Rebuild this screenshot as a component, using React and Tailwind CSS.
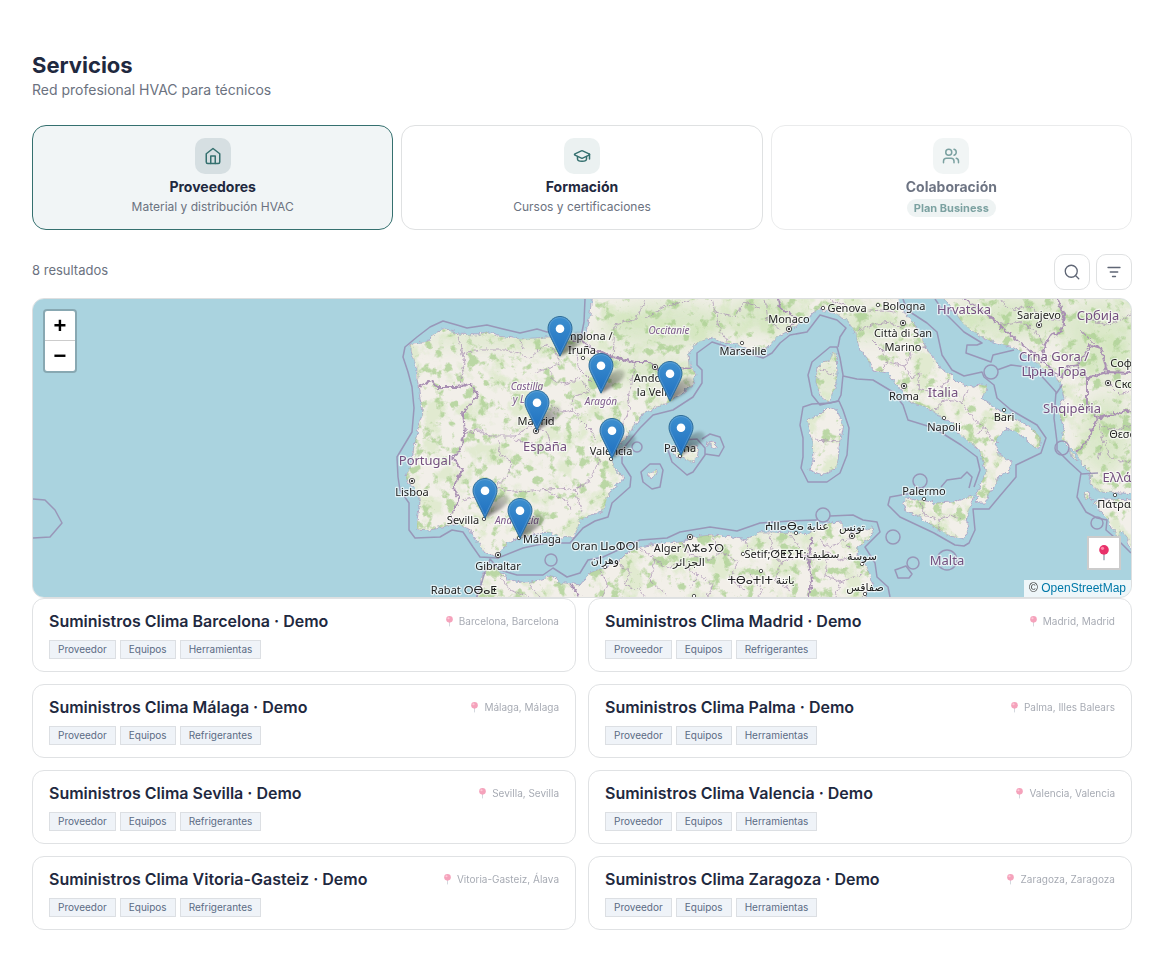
import React, { useState } from "react";
import { GraduationCap, Search, Users } from "lucide-react";

const suppliers = [
  { city: "Barcelona", place: "Barcelona, Barcelona", extra: "Herramientas", x: 637, y: 103 },
  { city: "Madrid", place: "Madrid, Madrid", extra: "Refrigerantes", x: 504, y: 132 },
  { city: "Málaga", place: "Málaga, Málaga", extra: "Refrigerantes", x: 487, y: 240 },
  { city: "Palma", place: "Palma, Illes Balears", extra: "Herramientas", x: 648, y: 157 },
  { city: "Sevilla", place: "Sevilla, Sevilla", extra: "Refrigerantes", x: 452, y: 220 },
  { city: "Valencia", place: "Valencia, Valencia", extra: "Herramientas", x: 579, y: 160 },
  { city: "Vitoria-Gasteiz", place: "Vitoria-Gasteiz, Álava", extra: "Refrigerantes", x: 527, y: 58 },
  { city: "Zaragoza", place: "Zaragoza, Zaragoza", extra: "Herramientas", x: 568, y: 95 },
];

const MAP_WIDTH = 1098;
const MAP_HEIGHT = 298;

const land = [
  // Iberia, France, Italy
  "M410 345L415 343 430 341 432 335 443 329 450 330 457 334 477 335 487 332 497 336 520 339 537 338 547 337 557 337 572 340 580 341 586 332 590 315 592 290H898V299L900 309 907 315 913 322 920 335 932 358 937 362 942 370 951 375 959 383 971 387 980 385 987 386 986 392 981 398 994 407 1014 418 1034 430 1041 438 1039 447 1034 448 1029 442 1017 432 1006 428 997 438 996 447 997 453 1011 462 1009 473 999 475 997 483 989 493 986 503 977 503 976 495 981 483 986 473 981 455 977 448 967 440 959 433 952 422 944 419 934 412 927 407 910 402 897 385 887 373 873 370 867 358 859 348 855 332 847 320 830 312 820 308 803 320 790 330 777 337 768 347 757 352 742 347 733 343 720 342 712 337 697 343 689 352 690 367 695 373 693 385 670 402 657 407 643 413 637 422 628 435 622 443 613 455 612 460 615 470 625 478 613 488 607 498 603 512 590 515 580 520 577 530 572 538 560 537 547 532 533 535 520 538 508 543 502 550 498 558 493 556 483 550 475 538 472 532 457 523 450 525 430 530 417 529 417 520 420 503 417 490 407 483 406 477 412 460 415 440 423 412 420 398 417 378 417 367 413 358Z",
  // Balkans and Greece
  "M944 290V299L957 315 964 325 981 337 997 343 1014 347 1031 358 1041 367 1054 375 1061 385 1064 398 1059 412 1064 428 1062 440 1070 448 1076 452 1082 464 1091 473 1090 483 1100 492 1140 494V290Z",
  "M1094 503L1103 499 1140 500V560L1130 547 1127 537 1121 530 1119 540 1113 530 1108 519 1101 512Z",
  // North Africa
  "M475 600L480 585 483 573 488 567 497 568 500 573 510 580 527 583 547 578 553 575 557 582 580 585 590 573 603 568 617 563 627 553 640 547 660 543 683 542 693 537 713 535 733 537 745 540 760 532 773 532 783 533 793 532 807 535 817 528 830 523 843 522 843 528 853 532 864 530 872 527 873 532 868 540 858 547 857 555 867 567 870 577 872 585 863 600Z",
  // Sicily
  "M903 503L907 498 915 500 923 500 934 503 954 502 974 495 966 520 969 525 964 539 947 535 934 527 920 517 905 510Z",
  // Sardinia
  "M807 420L820 415 828 407 837 410 843 425 840 438 839 450 837 467 823 475 817 473 810 470 813 460 812 438Z",
  // Corsica
  "M817 368L823 362 830 360 833 352 836 353 837 375 835 388 828 402 820 395 816 382Z",
  // Balearic islands
  "M673 455L680 450 688 447 692 449 697 445 698 453 693 463 687 460 680 457Z",
  "M707 443L713 442 719 448 713 448Z",
  "M648 474L657 470 655 475 650 478Z",
  "M1084 492L1089 491 1088 497 1093 499 1086 500Z",
  "M1068 449L1073 453 1077 461 1073 457Z",
];

const seaBorders = [
  "M585 299L584 322 580 342M559 331L547 332 537 329 520 333 503 329 487 325 467 328 457 325 443 321 430 327 417 337 405 347 403 357 408 372 412 387 414 408 412 432 397 457 398 477 400 490 409 503 409 530 415 538 440 537 452 530 463 532 473 547 480 557 498 558 523 548 547 543 570 543 583 528 595 521 608 517 612 503 630 487 631 477 622 463 622 450 640 428 653 415 673 410 693 397 702 383 702 370 697 365 697 353 712 342 747 353 763 358 772 353 780 343 790 335 807 332 820 315 837 320 846 328 840 337 838 347",
  "M808 375L812 362 830 347 837 347 840 358 843 375 841 395 838 401 820 405 812 395Z",
  "M803 457L803 438 800 425 803 407 812 404 830 403 839 401 843 410 849 428 847 455 840 473 827 482 808 482 801 468Z",
  "M843 376L857 379 873 380 893 392 903 405 908 420 934 428 961 445 977 457 980 470 974 487M969 488L972 477 967 472 961 478 947 480 941 487",
  "M913 493L890 497 888 505 900 517 934 533 955 545 964 546 969 543 975 530 973 509 989 509 999 497 1016 477 1016 465 1041 453 1046 438 1037 425 1011 410 997 398 994 385 984 377 982 372 964 376 952 370 942 355 937 332 927 323 907 310 903 299",
  "M935 299L944 312 964 332 982 343 977 345 967 345 966 353 991 362 993 355 1014 350M997 370L1011 365 1034 368 1047 382 1056 392 1054 418 1057 442 1057 450 1070 463 1081 473 1077 497 1086 512 1097 518 1107 520 1106 530 1121 543 1131 553M1056 394L1062 385M1081 474L1098 473",
  "M477 597L484 575 490 559 500 570 517 575 543 575 553 568 567 577 580 573 588 560 603 557 640 540 667 538 680 532 710 527 737 531 760 523 790 521 817 520M830 516L853 515 863 520 877 522 880 532 865 547 875 563 877 577 888 587 890 597",
  "M668 450L683 440 697 439 705 448 705 455 693 472 687 475 672 462ZM702 439L710 434 720 437 724 447 719 456 705 454",
  "M650 464L660 464 663 470 660 487 652 489 643 482 641 472Z",
  "M33 499L45 500 55 510 62 523 50 537 33 538",
  "M895 570L906 566 912 574 909 578 898 578Z",
];

const seaCircles = [
  [991, 372, 7], [1062, 448, 7], [1097, 523, 6], [920, 481, 7], [893, 537, 7], [913, 563, 6],
  [947, 560, 10], [823, 515, 7], [551, 560, 6], [637, 447, 5],
];

const countryBorders = [
  "M412 387L418 387 432 380 437 387 457 387 470 384 478 395 463 413 465 432 460 452 452 457 462 470 453 488 460 498 452 513 452 525",
  "M570 340L580 338 593 350 613 357 635 362 650 362 657 370 677 368 693 369",
  "M778 299L780 308 797 317 790 329",
  "M964 299L988 315 1014 338 1044 362 1061 378 1067 367 1077 365 1087 378 1087 405 1097 418 1087 442 1077 452",
  "M1057 299L1064 315 1062 332 1051 335 1044 348 1041 362M1077 365L1091 345 1101 348 1107 372 1131 373M1087 378L1107 372M1097 418L1131 410",
  "M812 537L808 557 812 580 808 597M570 583L580 597",
];

const regionBorders = [
  "M457 334L462 350 465 363 461 375 462 386M463 354L480 350 505 350 520 354 530 358 545 345M520 339L524 350M545 345L555 350 560 362 550 368 552 380 565 384 580 378 590 392M550 368L535 372M585 345L577 355 580 370 592 382",
  "M560 335L567 346 575 352M635 362L632 380 628 396 630 410 622 425M590 392L575 396 570 405 580 420 590 430 596 440M463 434L478 430 490 436 515 436 530 426 545 430 550 442 540 446 515 440M550 405L562 412 575 410",
  "M498 440L500 455 512 462 508 475 495 487 503 490 525 492 540 490 560 488 575 490 590 482M462 500L480 495 490 485M590 452L600 460 590 480 575 490 582 512M545 490L565 500 572 510",
  "M613 357L615 325 637 318 645 300M645 318L662 308 690 300M712 299L715 312 735 316 745 302 760 308M715 312L720 330 727 341M765 299L768 320 780 330",
  "M830 300L845 305 862 312 880 310 895 312M858 330L872 325 890 322 905 330M880 372L888 362 882 350 872 340M888 362L905 366 912 378 920 372 918 388 932 392 950 380M905 366L913 350 928 346M934 410L945 400 962 402 975 420 985 428 992 440M962 402L968 390M985 428L975 435",
  "M990 318L1005 325 1020 322 1035 330 1045 348M1000 300L1012 310 1030 305 1040 318 1060 320M1090 320L1108 325 1131 315M1080 330L1095 345M1105 380L1120 395 1131 390M1100 425L1115 430 1131 425M1105 440L1108 455 1120 462 1131 460M1097 418L1103 440 1098 460",
  "M500 575L510 590 530 597M530 585L540 597M600 570L608 585 602 597M617 563L630 572 625 585 640 590 645 597M640 548L655 560 668 568 680 562 697 575 690 590M683 543L690 555 710 560 722 552 738 562 730 578 745 590M713 536L718 550M745 542L755 555 770 552 782 562 775 580 790 590M782 562L800 555 812 560M770 535L772 550M790 535L800 548",
  "M812 560L828 552 840 560 855 556M820 540L830 548 842 540 850 548M828 552L825 575 840 582 835 597M840 582L860 575M850 535L846 543M700 575L712 585 708 597M750 575L762 590 758 597M655 560L650 580 668 597",
  "M920 502L925 515 938 520 950 515 962 520M938 520L940 532M815 440L840 442M818 368L836 376",
];

// [text, x, y, kind]
const labels = [
  ["Occitanie", 669, 334, "region"],
  ["Castilla", 527, 390, "region"],
  ["y León", 527, 403, "region"],
  ["Aragón", 601, 405, "region"],
  ["Andalucía", 517, 524, "region"],
  ["Pamplona /", 583, 340, "city"],
  ["Iruña", 582, 354, "city"],
  ["Andorra", 655, 382, "city"],
  ["la Vella", 655, 396, "city"],
  ["Marseille", 743, 355, "city"],
  ["Monaco", 789, 323, "city"],
  ["Genova", 847, 312, "city"],
  ["Bologna", 904, 310, "city"],
  ["Città di San", 903, 337, "city"],
  ["Marino", 903, 351, "city"],
  ["Roma", 904, 400, "city"],
  ["Napoli", 944, 431, "city"],
  ["Bari", 1004, 421, "city"],
  ["Palermo", 924, 495, "city"],
  ["Sarajevo", 1039, 319, "city"],
  ["Софија", 1129, 367, "city"],
  ["Скопје", 1132, 388, "city"],
  ["Θεσσα", 1126, 438, "city"],
  ["Πάτρα", 1114, 508, "city"],
  ["Madrid", 536, 425, "city"],
  ["Valencia", 611, 455, "city"],
  ["Palma", 680, 452, "city"],
  ["Lisboa", 412, 496, "city"],
  ["Sevilla", 463, 524, "city"],
  ["Málaga", 542, 543, "city"],
  ["Gibraltar", 498, 570, "city"],
  ["Rabat ⵔⴱⴰⵟ", 464, 594, "city"],
  ["Oran ⵡⴰⵀⵔⵏ", 605, 550, "city"],
  ["وهران", 605, 564, "city"],
  ["Alger ⴷⵣⴰⵢⵔ", 689, 552, "city"],
  ["الجزائر", 689, 566, "city"],
  ["Setif;ⵚⵟⵉⴼ;سطيف", 792, 558, "city"],
  ["ⵄⵏⵏⴰⴱⴰ عنابة", 797, 530, "city"],
  ["ⵜⴱⴰⵜⵏⵜ باتنة", 761, 584, "city"],
  ["تونس", 852, 531, "city"],
  ["سوسة", 862, 560, "city"],
  ["صفاقس", 865, 591, "city"],
  ["Portugal", 425, 465, "country"],
  ["España", 545, 451, "country"],
  ["Italia", 943, 397, "country"],
  ["Malta", 947, 565, "country"],
  ["Hrvatska", 964, 314, "country"],
  ["Србија", 1098, 320, "country"],
  ["Crna Gora /", 1054, 361, "country"],
  ["Црна Гора", 1054, 376, "country"],
  ["Shqipëria", 1072, 413, "country"],
  ["Ελλάς", 1120, 482, "country"],
];

const labelStyles = {
  region: "fill-[#7d5a8c] text-[10px] italic",
  city: "fill-[#222222] text-[11px]",
  country: "fill-[#74507f] text-[13px]",
};

const capitals = [[655, 367], [789, 329], [903, 323], [904, 386], [1039, 325], [1108, 383], [536, 431], [412, 481], [498, 555], [690, 537], [852, 536]];
const towns = [[583, 358], [742, 343], [823, 308], [878, 305], [944, 418], [1004, 410], [924, 499], [1115, 495], [484, 519], [519, 538], [611, 459], [680, 456], [605, 567], [743, 554], [796, 533], [761, 571], [862, 564], [865, 594], [694, 596]];

const MapCanvas = () => (
  <svg
    className="absolute inset-0 w-full h-full font-['Noto_Sans','DejaVu_Sans',sans-serif]"
    viewBox="33 299 1098 298"
    preserveAspectRatio="xMidYMid slice"
    role="img"
    aria-label="Mapa de proveedores"
  >
    <defs>
      <filter id="rough" x="-5%" y="-5%" width="110%" height="110%">
        <feTurbulence type="fractalNoise" baseFrequency="0.22" numOctaves="3" seed="4" result="n" />
        <feDisplacementMap in="SourceGraphic" in2="n" scale="6" xChannelSelector="R" yChannelSelector="G" />
      </filter>
      <filter id="woods" x="0" y="0" width="100%" height="100%" colorInterpolationFilters="sRGB">
        <feTurbulence type="fractalNoise" baseFrequency="0.09" numOctaves="5" seed="11" />
        <feColorMatrix values="0 0 0 0 0.68  0 0 0 0 0.82  0 0 0 0 0.58  0 7 0 0 -3.900" />
      </filter>
      <filter id="meadow" x="0" y="0" width="100%" height="100%" colorInterpolationFilters="sRGB">
        <feTurbulence type="fractalNoise" baseFrequency="0.045" numOctaves="6" seed="27" />
        <feColorMatrix values="0 0 0 0 0.81  0 0 0 0 0.90  0 0 0 0 0.72  0 0 6 0 -3.100" />
      </filter>
      <filter id="soft" x="-50%" y="-50%" width="200%" height="200%">
        <feGaussianBlur stdDeviation="8" />
      </filter>
      <clipPath id="land">
        {land.map((d) => (
          <path key={d} d={d} />
        ))}
      </clipPath>
    </defs>
    <rect x="33" y="299" width="1098" height="298" fill="#aad3df" />
    <g filter="url(#rough)" fill="#f2efe9" stroke="#a99cc0" strokeWidth="0.8">
      {land.map((d) => (
        <path key={d} d={d} />
      ))}
    </g>
    <g clipPath="url(#land)">
      <g fill="#cbe3b5" opacity="0.6" filter="url(#soft)">
        <ellipse cx="665" cy="325" rx="65" ry="22" />
        <ellipse cx="650" cy="372" rx="50" ry="12" />
        <ellipse cx="765" cy="315" rx="40" ry="18" />
        <ellipse cx="500" cy="340" rx="80" ry="7" />
        <ellipse cx="870" cy="325" rx="35" ry="14" />
        <ellipse cx="1010" cy="318" rx="60" ry="20" />
        <ellipse cx="1100" cy="340" rx="35" ry="40" />
        <ellipse cx="828" cy="378" rx="9" ry="20" />
        <ellipse cx="1105" cy="435" rx="25" ry="40" />
        <ellipse cx="790" cy="538" rx="35" ry="5" />
      </g>
      <rect x="33" y="299" width="1098" height="298" filter="url(#meadow)" opacity="0.5" />
      <rect x="33" y="299" width="1098" height="298" filter="url(#woods)" opacity="0.8" />
      <g fill="none" stroke="#a990b3" filter="url(#rough)">
        {regionBorders.map((d) => (
          <path key={d} d={d} strokeWidth="0.9" opacity="0.8" />
        ))}
        {countryBorders.map((d) => (
          <path key={d} d={d} strokeWidth="1.900" />
        ))}
      </g>
    </g>
    <g fill="none" stroke="#968cb2" strokeWidth="1.500" strokeLinejoin="round" opacity="0.85">
      {seaBorders.map((d) => (
        <path key={d} d={d} />
      ))}
      {seaCircles.map(([x, y, r]) => (
        <circle key={`${x}-${y}`} cx={x} cy={y} r={r} />
      ))}
    </g>
    <g fill="#fff" stroke="#444" strokeWidth="0.9">
      {towns.map(([x, y]) => (
        <circle key={`${x}-${y}`} cx={x} cy={y} r="1.700" />
      ))}
      {capitals.map(([x, y]) => (
        <circle key={`${x}-${y}`} cx={x} cy={y} r="2.700" />
      ))}
    </g>
    <g fill="#333">
      {capitals.map(([x, y]) => (
        <circle key={`${x}-${y}`} cx={x} cy={y} r="1.200" />
      ))}
    </g>
    <g textAnchor="middle" stroke="#fff" strokeOpacity="0.65" strokeWidth="2.500" strokeLinejoin="round" className="[paint-order:stroke]">
      {labels.map(([text, x, y, kind]) => (
        <text key={text} x={x} y={y} className={labelStyles[kind]}>
          {text}
        </text>
      ))}
    </g>
  </svg>
);

const Marker = ({ supplier }) => (
  <button
    type="button"
    aria-label={`Suministros Clima ${supplier.city}`}
    className="absolute w-[25px] h-[41px] -translate-x-1/2 -translate-y-full"
    style={{
      left: `${(supplier.x / MAP_WIDTH) * 100}%`,
      top: `${(supplier.y / MAP_HEIGHT) * 100}%`,
    }}
  >
    <svg className="w-[25px] h-[41px] overflow-visible" viewBox="0 0 25 41">
      <defs>
        <linearGradient id="pinFill" x1="0" y1="0" x2="0" y2="1">
          <stop offset="0" stopColor="#3d8fcf" />
          <stop offset="1" stopColor="#1f70c0" />
        </linearGradient>
        <linearGradient id="shadowFill" x1="0" y1="1" x2="1" y2="0">
          <stop offset="0" stopColor="#000" stopOpacity="0.55" />
          <stop offset="1" stopColor="#000" stopOpacity="0.12" />
        </linearGradient>
        <filter id="pinShadow" x="-50%" y="-50%" width="200%" height="200%">
          <feGaussianBlur stdDeviation="1.800" />
        </filter>
      </defs>
      <path d="M12.5 40.500C14 31 19 20 28 17c8-2 11 4 6 9-5 6-13 9-21.500 14.500z" fill="url(#shadowFill)" filter="url(#pinShadow)" />
      <path
        d="M12.500.5C5.900.5.500 5.900.500 12.500c0 2.800 1 5.200 2.200 7.700L12.500 40.200l9.800-20c1.200-2.500 2.200-4.900 2.200-7.700C24.500 5.900 19.100.5 12.500.5z"
        fill="url(#pinFill)"
        stroke="#2e6c97"
      />
      <path
        d="M12.500 1.600C6.500 1.600 1.600 6.500 1.600 12.500c0 2.500.900 4.800 2.100 7.200L12.500 37.600l8.800-17.900c1.200-2.400 2.100-4.700 2.100-7.200C23.400 6.500 18.500 1.600 12.500 1.600z"
        fill="none"
        stroke="#fff"
        strokeOpacity="0.15"
      />
      <circle cx="12.500" cy="12.800" r="4.300" fill="#fff" />
    </svg>
  </button>
);

const Pushpin = ({ className }) => (
  <svg className={className} viewBox="0 0 16 16" aria-hidden="true">
    <path d="M7.300 8h1.400v6.600l-.7 1.200-.7-1.200z" fill="#9aa5b5" />
    <circle cx="8" cy="4.900" r="4.800" fill="#e8316a" />
    <circle cx="6.500" cy="3.300" r="1.600" fill="#ff86a8" />
  </svg>
);

const HomeIcon = () => (
  <svg
    className="w-[18px] h-[18px]"
    viewBox="0 0 24 24"
    fill="none"
    stroke="currentColor"
    strokeWidth="2"
    strokeLinecap="round"
    strokeLinejoin="round"
  >
    <path d="M3 9l9-7 9 7v11a2 2 0 0 1-2 2H5a2 2 0 0 1-2-2z" />
    <path d="M9 22V12h6v10" />
  </svg>
);

const SupplierCard = ({ supplier }) => (
  <article className="flex flex-col gap-[9px] px-4 py-3 bg-white border border-[#e0e2e4] rounded-xl">
    <div className="flex items-center justify-between">
      <h2 className="text-base leading-5 font-semibold text-[#1f2940]">
        Suministros Clima {supplier.city} · Demo
      </h2>
      <span className="flex items-center gap-1 text-[10px] leading-4 text-[#6b7280] opacity-60">
        <Pushpin className="w-[11px] h-[11px] opacity-75" />
        {supplier.place}
      </span>
    </div>
    <div className="flex gap-1 text-[10px] leading-[17px] text-[#5b6b84]">
      <span className="px-2 bg-[#eff3f8] border border-[#dcdfe3]">Proveedor</span>
      <span className="px-2 bg-[#eff3f8] border border-[#dcdfe3]">Equipos</span>
      <span className="px-2 bg-[#eff3f8] border border-[#dcdfe3]">{supplier.extra}</span>
    </div>
  </article>
);

const App = () => {
  const [tab, setTab] = useState("proveedores");

  const tabClass = (name) =>
    `flex flex-col items-center p-3 border rounded-[14px] ${
      tab === name ? "bg-[#f1f5f6] border-[#35706f]" : "bg-white border-[#dfe1e2]"
    }`;

  const iconClass = (name) =>
    `flex items-center justify-center w-9 h-9 rounded-[10px] text-[#35706f] ${
      tab === name ? "bg-[#d6dfe2]" : "bg-[#ebf1f1]"
    }`;

  return (
    <main className="px-8 pt-12 pb-12 bg-white text-[#1f2940] font-['Inter',sans-serif]">
      <header>
        <h1 className="text-[22px] leading-[34px] font-bold">Servicios</h1>
        <p className="text-sm leading-4 text-[#6b7280]">Red profesional HVAC para técnicos</p>
      </header>

      {/* Sections */}
      <div className="grid grid-cols-3 gap-2 mt-[27px]">
        <button type="button" className={tabClass("proveedores")} onClick={() => setTab("proveedores")}>
          <span className={iconClass("proveedores")}>
            <HomeIcon />
          </span>
          <span className="mt-1 text-sm leading-[17px] font-bold">Proveedores</span>
          <span className="mt-1 text-xs leading-4 text-[#6b7280]">Material y distribución HVAC</span>
        </button>
        <button type="button" className={tabClass("formacion")} onClick={() => setTab("formacion")}>
          <span className={iconClass("formacion")}>
            <GraduationCap size={18} />
          </span>
          <span className="mt-1 text-sm leading-[17px] font-bold">Formación</span>
          <span className="mt-1 text-xs leading-4 text-[#6b7280]">Cursos y certificaciones</span>
        </button>
        <button type="button" disabled className={`${tabClass("colaboracion")} opacity-65`}>
          <span className={iconClass("colaboracion")}>
            <Users size={18} />
          </span>
          <span className="mt-1 text-sm leading-[17px] font-bold">Colaboración</span>
          <span className="mt-1 px-[7px] rounded-full bg-[#e6eded] text-[11px] leading-[18px] font-bold text-[#35706f]">
            Plan Business
          </span>
        </button>
      </div>

      {/* Toolbar */}
      <div className="flex items-start justify-between mt-6 mb-2">
        <p className="text-[13px] leading-8 text-[#6b7280]">8 resultados</p>
        <div className="flex gap-[6px] text-[#5f6675]">
          <button
            type="button"
            aria-label="Buscar"
            className="flex items-center justify-center w-9 h-9 border border-[#dfe1e2] rounded-[10px]"
          >
            <Search size={18} strokeWidth={1.75} />
          </button>
          <button
            type="button"
            aria-label="Filtrar"
            className="flex items-center justify-center w-9 h-9 border border-[#dfe1e2] rounded-[10px]"
          >
            <svg
              className="w-[18px] h-[18px]"
              viewBox="0 0 24 24"
              fill="none"
              stroke="currentColor"
              strokeWidth="1.75"
              strokeLinecap="round"
            >
              <path d="M4 6h16M7 12h10M10 18h4" />
            </svg>
          </button>
        </div>
      </div>

      {/* Map */}
      <section className="relative h-[300px] overflow-hidden border border-[#dddfe0] rounded-xl">
        <MapCanvas />
        {suppliers.map((supplier) => (
          <Marker key={supplier.city} supplier={supplier} />
        ))}
        <div className="absolute left-[10px] top-[10px] flex flex-col bg-white border-2 border-black/20 bg-clip-padding rounded font-['Liberation_Sans',sans-serif] text-[22px] leading-[30px] font-bold text-black">
          <button type="button" aria-label="Acercar" className="w-[30px] h-[30px] border-b border-[#ccc]">
            +
          </button>
          <button type="button" aria-label="Alejar" className="w-[30px] h-[30px]">
            −
          </button>
        </div>
        <button
          type="button"
          aria-label="Mi ubicación"
          className="absolute right-[10px] bottom-[27px] flex items-center justify-center w-[34px] h-[34px] bg-white border-2 border-[#ccc]"
        >
          <Pushpin className="w-4 h-4" />
        </button>
        <p className="absolute right-0 bottom-0 px-[5px] bg-white/80 font-['Liberation_Sans',sans-serif] text-xs leading-[17px] text-[#333]">
          ©{" "}
          <a href="#mapa" className="text-[#0078a8]">
            OpenStreetMap
          </a>
        </p>
      </section>

      {/* Results */}
      <section className="grid grid-cols-2 gap-3">
        {suppliers.map((supplier) => (
          <SupplierCard key={supplier.city} supplier={supplier} />
        ))}
      </section>
    </main>
  );
};

export default App;
